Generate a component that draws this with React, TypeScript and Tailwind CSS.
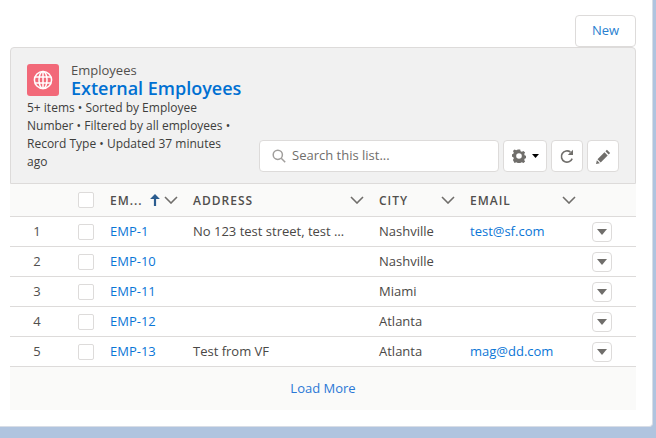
const rows = [
  { n: 1, id: 'EMP-1', address: 'No 123 test street, test street', city: 'Nashville', email: 'test@sf.com' },
  { n: 2, id: 'EMP-10', address: '', city: 'Nashville', email: '' },
  { n: 3, id: 'EMP-11', address: '', city: 'Miami', email: '' },
  { n: 4, id: 'EMP-12', address: '', city: 'Atlanta', email: '' },
  { n: 5, id: 'EMP-13', address: 'Test from VF', city: 'Atlanta', email: 'mag@dd.com' },
];

const gridCols = 'grid grid-cols-[60px_32px_83px_186px_91px_122px_52px]';

function Chevron() {
  return (
    <svg width="14" height="8" viewBox="0 0 14 8" fill="none" stroke="#706e6b" strokeWidth="1.6">
      <path d="M1 1l6 6 6-6" />
    </svg>
  );
}

function Checkbox() {
  return <div className="w-4 h-4 bg-white border border-[#dddbda] rounded-[2px]" />;
}

function IconButton({ children, className }: { children: React.ReactNode; className: string }) {
  return (
    <button className={`h-8 flex items-center justify-center bg-white border border-[#dddbda] rounded ${className}`}>
      {children}
    </button>
  );
}

export default function App() {
  return (
    <div
      className="w-[656px] h-[438px] bg-[#b0c4df] overflow-hidden text-[13px] text-[#4a4846]"
      style={{ fontFamily: '"Open Sans", sans-serif' }}
    >
      <div className="w-[653px] h-[427px] bg-white rounded-br border-b border-r border-[#d8dde6] pl-2.5 pr-[16px] pt-[15px]">
        <div className="flex justify-end h-8">
          <button className="w-[61px] h-8 bg-white border border-[#dddbda] rounded text-[#2a7fd0] text-[13px]">New</button>
        </div>

        <div className="w-[626px]">
          {/* List header */}
          <div className="h-[137px] bg-[#f1f1f1] border border-[#dddbda] rounded-t pl-4 pr-4 pt-4 flex">
            <div className="w-[232px] shrink-0">
              <div className="flex items-center gap-[12px] h-8">
                <div className="w-8 h-8 rounded-[3px] bg-[#f26979] flex items-center justify-center">
                  <svg width="20" height="20" viewBox="0 0 20 20" fill="none" stroke="#fff" strokeWidth="1.5">
                    <circle cx="10" cy="10" r="8.6" />
                    <ellipse cx="10" cy="10" rx="4" ry="8.6" />
                    <path d="M10 1.4v17.2M2 7h16M2 13h16" />
                  </svg>
                </div>
                <div className="flex flex-col">
                  <span className="text-[13px] leading-[15px] text-[#514f4d]">Employees</span>
                  <span className="text-[18px] leading-[20px] font-semibold text-[#0070d2] whitespace-nowrap">External Employees</span>
                </div>
              </div>
              <p className="mt-[3px] text-[12px] leading-[18px] text-[#3e3e3c] w-[208px]">
                5+ items • Sorted by Employee Number • Filtered by all employees • Record Type • Updated 37 minutes ago
              </p>
            </div>
            <div className="flex-1 flex items-end pb-[11px] gap-[4px]">
              <div className="w-[240px] h-8 bg-white border border-[#dddbda] rounded flex items-center pl-[12px] gap-[6px]">
                <svg width="14" height="14" viewBox="0 0 14 14" fill="none" stroke="#a09e9c" strokeWidth="1.5">
                  <circle cx="5.8" cy="5.8" r="4.6" />
                  <path d="M9.2 9.2l4 4" />
                </svg>
                <span className="text-[13px] text-[#706e6b]">Search this list...</span>
              </div>
              <IconButton className="w-11 gap-[6px]">
                <svg width="14" height="14" viewBox="0 0 14 14" fill="#706e6b" fillRule="evenodd">
                  <path d="M5.8 0.5h2.4l.4 1.7 1.3.6 1.5-.9 1.7 1.7-.9 1.5.6 1.3 1.7.4v2.4l-1.7.4-.6 1.3.9 1.5-1.7 1.7-1.5-.9-1.3.6-.4 1.7H5.8l-.4-1.7-1.3-.6-1.5.9L.9 10.9l.9-1.5-.6-1.3-1.7-.4V5.3l1.7-.4.6-1.3-.9-1.5L2.6.4l1.5.9 1.3-.6zM7 4.2a2.8 2.8 0 100 5.6 2.8 2.8 0 000-5.6z" />
                </svg>
                <svg width="7" height="4" viewBox="0 0 7 4" fill="#000">
                  <path d="M0 0h7L3.5 4z" />
                </svg>
              </IconButton>
              <IconButton className="w-8">
                <svg width="16" height="16" viewBox="0 0 16 16" fill="none" stroke="#706e6b" strokeWidth="1.6">
                  <path d="M13.2 10.6A5.6 5.6 0 1 1 11.4 4" />
                  <path d="M14 1.8v5.2H8.8z" fill="#706e6b" stroke="none" />
                </svg>
              </IconButton>
              <IconButton className="w-8">
                <svg width="15" height="15" viewBox="0 0 14 14" fill="#706e6b">
                  <path d="M10.2.8l3 3-1.4 1.4-3-3zM7.9 3.1l3 3L4.4 12.6l-3-3zM.8 10.4l2.8 2.8-3.6.8z" />
                </svg>
              </IconButton>
            </div>
          </div>

          {/* Column headings */}
          <div className={`${gridCols} h-[33px] items-center bg-[#fafaf9] border-b border-[#dddbda] text-[12px] font-semibold tracking-[1px] text-[#514f4d]`}>
            <div />
            <div className="pl-2"><Checkbox /></div>
            <div className="pl-2 flex items-center">
              <span className="mt-[1px] w-[30px] whitespace-nowrap">EM...</span>
              <svg className="ml-[10px]" width="10" height="12" viewBox="0 0 9 11" fill="#2b5c8f">
                <path d="M4.5 0L9 4.5H5.5V11h-2V4.5H0z" />
              </svg>
              <span className="ml-[4px]"><Chevron /></span>
            </div>
            <div className="pl-2 pr-[7px] flex items-center justify-between"><span className="mt-[1px]">ADDRESS</span><Chevron /></div>
            <div className="pl-2 pr-[7px] flex items-center justify-between"><span className="mt-[1px]">CITY</span><Chevron /></div>
            <div className="pl-2 pr-[8px] flex items-center justify-between"><span className="mt-[1px]">EMAIL</span><Chevron /></div>
            <div />
          </div>

          {/* Rows */}
          {rows.map((r) => (
            <div key={r.id} className={`${gridCols} h-[30px] items-center border-b border-[#dddbda]`}>
              <div className="pr-[6px] pt-[1px] text-center text-[#514f4d]">{r.n}</div>
              <div className="pl-2"><Checkbox /></div>
              <div className="pl-2"><a className="text-[#0b76d6]">{r.id}</a></div>
              <div className="pl-2 pr-[25px] truncate">{r.address}</div>
              <div className="pl-2">{r.city}</div>
              <div className="pl-2"><a className="text-[#0b76d6]">{r.email}</a></div>
              <div className="pl-2">
                <button className="w-5 h-5 bg-white border border-[#dddbda] rounded flex items-center justify-center">
                  <svg width="10" height="6" viewBox="0 0 10 6" fill="#706e6b">
                    <path d="M0 0h10L5 6z" />
                  </svg>
                </button>
              </div>
            </div>
          ))}

          <div className="h-[43px] bg-[#fafaf9] flex items-center justify-center">
            <a className="text-[#2a78d6] text-[13px]">Load More</a>
          </div>
        </div>
      </div>
    </div>
  );
}
